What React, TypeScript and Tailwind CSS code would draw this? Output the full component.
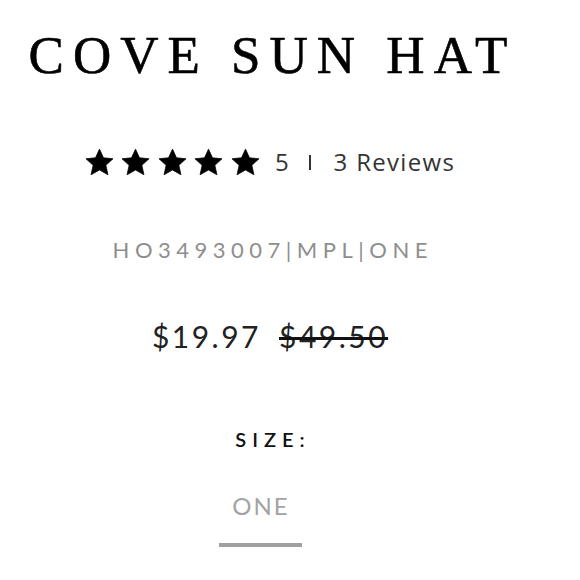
const Star = () => (
  <svg viewBox="0 0 24 23" className="h-[28px] w-[29px]">
    <path
      d="M12 0.8l3.3 7.2 7.9.8-5.9 5.4 1.7 7.9L12 18.1l-7 4 1.7-7.9L.8 8.8l7.9-.8z"
      fill="#000"
      stroke="#000"
      strokeWidth="0.6"
      strokeLinejoin="round"
    />
  </svg>
);

const App = () => {
  return (
    <div className="w-[580px] h-[580px] bg-white overflow-hidden">
      <div className="w-[540px] flex flex-col items-center pt-[29px]">
        <h1 className="pl-[5px] font-['Liberation_Serif',serif] text-[53px] leading-none tracking-[9px] text-black [-webkit-text-stroke:0.6px_#000]">
          COVE SUN HAT
        </h1>

        <div className="mt-[66px] h-[28px] flex items-center font-['Open_Sans',sans-serif] text-[24px] text-[#333]">
          <div className="flex gap-[7.5px]">
            <Star />
            <Star />
            <Star />
            <Star />
            <Star />
          </div>
          <span className="ml-[15px] leading-none">5</span>
          <div className="ml-[20px] w-[2px] h-[15px] bg-[#333]" />
          <span className="ml-[23px] leading-none tracking-[1.3px]">3 Reviews</span>
        </div>

        <div className="mt-[63px] pl-[5.5px] font-['Lato',sans-serif] text-[22px] leading-none tracking-[5.5px] text-[#8e8e8e]">
          HO3493007|MPL|ONE
        </div>

        <div className="mt-[60px] flex gap-[18px] font-['Lato',sans-serif] text-[30px] leading-none tracking-[2.5px] text-[#222]">
          <span>$19.97</span>
          <span className="line-through decoration-[3px] decoration-[#111]">$49.50</span>
        </div>

        <div className="mt-[78px] pl-[6px] font-['Lato',sans-serif] text-[20px] font-semibold leading-none tracking-[6px] text-[#111]">
          SIZE:
        </div>

        <div className="mr-[20px] flex flex-col items-center">
          <span className="mt-[45px] pl-[2px] font-['Lato',sans-serif] text-[24px] leading-none tracking-[2px] text-[#a3a3a3]">
            ONE
          </span>
          <div className="mt-[25px] w-[83px] h-[4px] bg-[#a0a0a0]" />
        </div>
      </div>
    </div>
  );
};

export default App;
